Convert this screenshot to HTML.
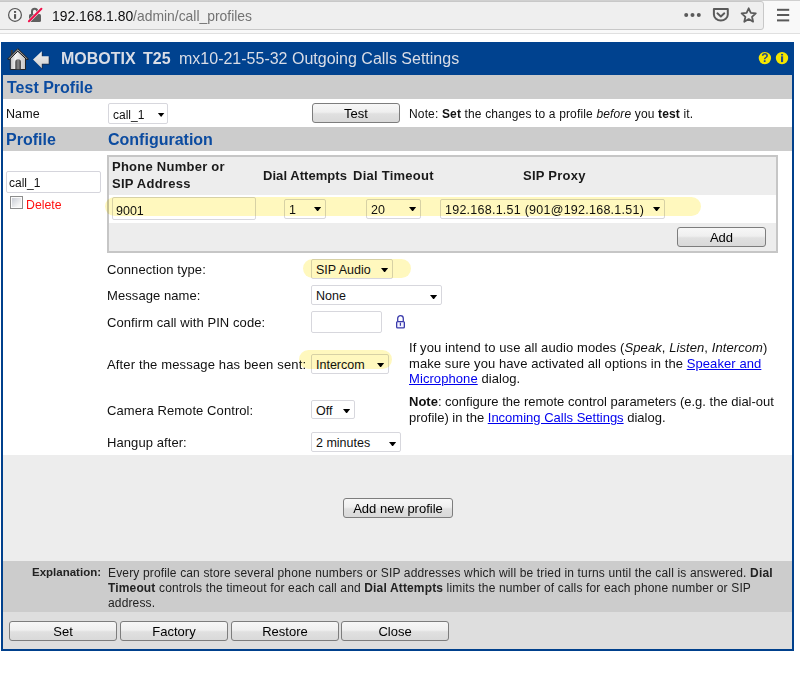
<!DOCTYPE html>
<html><head><meta charset="utf-8">
<style>
*{box-sizing:border-box;margin:0;padding:0}
html,body{width:800px;height:675px;overflow:hidden;background:#fff;font-family:"Liberation Sans",sans-serif;font-size:13px;color:#000;position:relative}
.a{position:absolute;white-space:nowrap}
.chrome{left:0;top:0;width:800px;height:34px;background:#f9f9f9;border-top:1px solid #d0d0d0;border-bottom:1px solid #e0e0e0}
.urlbar{left:-3px;top:1px;width:767px;height:29px;background:#efefef;border:1px solid #c8c8c8;border-radius:3px}
.url{left:52px;top:8px;font-size:13.9px;color:#0c0c0d}
.url span{color:#737373}
.dlg{left:1px;top:42px;width:793px;height:609px;border:2px solid #00408c;background:#fff}
.hdr{left:1px;top:42px;width:793px;height:33px;background:#00428f}
.band{background:#cccccc}
.bt{color:#0b4ba0;font-weight:bold;font-size:16px}
.btn{background:linear-gradient(#f7f7f7,#efefef 45%,#e0e0e0 55%,#d9d9d9);border:1px solid #7d7d7d;border-radius:3px;text-align:center;font-size:13px;color:#000;line-height:19px}
.sel{background:#fff;border:1px solid #d7d7dd;border-radius:2px;font-size:12.5px;line-height:20px;padding-left:4px;color:#111}
.arr{position:absolute;width:7.2px;height:4.4px;background:#000;clip-path:polygon(0 0,100% 0,50% 100%);margin-top:1.1px}
.hl{background:#fff8be;mix-blend-mode:multiply;border-radius:10px}
.lbl{font-size:13px;color:#111;letter-spacing:0.08px}
a{color:#0000ee;text-decoration:underline}
.hd{font-weight:bold;font-size:13px;color:#1a1a1a;letter-spacing:0.25px}
</style></head><body>
<!-- browser chrome -->
<div class="a chrome"></div>
<div class="a urlbar"></div>
<svg class="a" style="left:0;top:0" width="800" height="34" viewBox="0 0 800 34">
  <circle cx="15" cy="14.9" r="6.4" fill="none" stroke="#555" stroke-width="1.2"/>
  <rect x="14" y="14.1" width="2.1" height="4.7" fill="#555"/>
  <rect x="14" y="11" width="2.1" height="1.9" fill="#555"/>
  <path d="M32 14.5 V11.5 a2.65 2.65 0 0 1 5.3 0 V14.5" fill="none" stroke="#606060" stroke-width="2"/>
  <rect x="29" y="14" width="12" height="8" rx="1.5" fill="#606060"/>
  <line x1="28.2" y1="22" x2="42" y2="8.2" stroke="#efefef" stroke-width="3.1"/>
  <line x1="28.9" y1="21.3" x2="41.4" y2="8.8" stroke="#f0104a" stroke-width="2" stroke-linecap="round"/>
  <circle cx="686.2" cy="15" r="2" fill="#5a5a5a"/>
  <circle cx="692.5" cy="15" r="2" fill="#5a5a5a"/>
  <circle cx="698.8" cy="15" r="2" fill="#5a5a5a"/>
  <path d="M713.9 9.1 H727.8 V14.5 A6.95 6 0 0 1 713.9 14.5 Z" fill="none" stroke="#5a5a5a" stroke-width="2" stroke-linejoin="round"/>
  <path d="M717.4 13.3 l3.45 3.2 l3.45 -3.2" fill="none" stroke="#5a5a5a" stroke-width="1.9" stroke-linecap="round" stroke-linejoin="round"/>
  <path d="M748.7 8.3 l2.1 4.6 l5 .5 l-3.8 3.4 l1.1 4.9 l-4.4 -2.6 l-4.4 2.6 l1.1 -4.9 l-3.8 -3.4 l5 -.5 z" fill="none" stroke="#5a5a5a" stroke-width="1.8" stroke-linejoin="round"/>
  <rect x="777" y="8.8" width="12.2" height="2" fill="#5a5a5a"/>
  <rect x="777" y="14" width="12.2" height="2" fill="#5a5a5a"/>
  <rect x="777" y="19.4" width="12.2" height="2" fill="#5a5a5a"/>
</svg>
<div class="a url">192.168.1.80<span>/admin/call_profiles</span></div>

<!-- dialog -->
<div class="a dlg"></div>
<div class="a hdr"></div>
<svg class="a" style="left:0;top:42px" width="800" height="33" viewBox="0 42 800 33">
  <!-- home -->
  <defs>
    <linearGradient id="wall" x1="0" y1="0" x2="1" y2="0"><stop offset="0" stop-color="#bdbdbd"/><stop offset="0.35" stop-color="#f4f4f4"/><stop offset="1" stop-color="#c4c4c4"/></linearGradient>
    <linearGradient id="door" x1="0" y1="0" x2="1" y2="0"><stop offset="0" stop-color="#3a3a3a"/><stop offset="0.5" stop-color="#8a8a8a"/><stop offset="1" stop-color="#3a3a3a"/></linearGradient>
    <linearGradient id="arw" x1="0" y1="0" x2="0" y2="1"><stop offset="0" stop-color="#f0f0f0"/><stop offset="1" stop-color="#cfcfcf"/></linearGradient>
  </defs>
  <rect x="10.8" y="50" width="2" height="5" fill="#3a3a3a"/>
  <path d="M10.3 58 L17.8 51 L25.5 58 V69.5 H10.3 Z" fill="url(#wall)" stroke="#1a1a1a" stroke-width="0.9"/>
  <path d="M7.6 59 L17.8 48.6 L28.4 59 L26.8 59.6 L17.8 51.2 L9.2 59.6 Z" fill="#9a9a9a" stroke="#1a1a1a" stroke-width="1" stroke-linejoin="round"/>
  <path d="M15.3 69.3 V62 a2.8 2.8 0 0 1 5.6 0 V69.3 Z" fill="url(#door)"/>
  <!-- back arrow -->
  <path d="M34.2 60.6 L42.6 52.2 L42.6 57.2 L49.5 57.2 L49.5 64.6 L42.6 64.6 L42.6 69.2 Z" fill="#1e2a40"/>
  <path d="M33 59.6 L41.8 51.2 L41.8 56.2 L48.7 56.2 L48.7 63.7 L41.8 63.7 L41.8 68.3 Z" fill="url(#arw)"/>
  <!-- help icons -->
  <circle cx="764.9" cy="58.1" r="6.2" fill="#f5e600"/>
  <circle cx="782" cy="58.1" r="6.2" fill="#f5e600"/>
  <text x="765" y="62.2" font-family="Liberation Sans" font-weight="bold" font-size="12" fill="#234a8c" text-anchor="middle">?</text>
  <rect x="781" y="56.3" width="2.1" height="5.8" fill="#234a8c"/>
  <rect x="781" y="53.9" width="2.1" height="1.5" fill="#234a8c"/>
</svg>
<div class="a" style="left:61px;top:50px;font-size:16px;font-weight:bold;color:#d9dde6">MOBOTIX</div>
<div class="a" style="left:143px;top:50px;font-size:16px;font-weight:bold;color:#d9dde6">T25</div>
<div class="a" style="left:179px;top:50px;font-size:16px;color:#d9dde6">mx10-21-55-32 Outgoing Calls Settings</div>

<div class="a band" style="left:3px;top:75px;width:789px;height:24px"></div>
<div class="a bt" style="left:7px;top:79px">Test Profile</div>
<div class="a lbl" style="left:6px;top:107px;font-size:12.5px">Name</div>
<div class="a sel" style="left:108px;top:103px;width:60px;height:21px;font-size:12px;padding:1px 0 0 4px">call_1</div>
<div class="arr" style="left:157.5px;top:111.5px"></div>
<div class="a btn" style="left:312px;top:103px;width:88px;height:20px;line-height:20px">Test</div>
<div class="a" style="left:409px;top:107px;font-size:12px;color:#111;letter-spacing:0.15px">Note: <b>Set</b> the changes to a profile <i>before</i> you <b>test</b> it.</div>

<div class="a band" style="left:3px;top:127px;width:789px;height:24px"></div>
<div class="a bt" style="left:6px;top:131px">Profile</div>
<div class="a bt" style="left:108px;top:131px">Configuration</div>

<!-- profile list -->
<div class="a" style="left:6px;top:171px;width:95px;height:22px;border:1px solid #d5d5dc;border-radius:2px;font-size:12px;padding:4px 0 0 2px;color:#111">call_1</div>
<div class="a" style="left:10px;top:196px;width:13px;height:13px;border:1px solid #8c8c8c;box-shadow:inset 0 0 0 1px #fbfbfb;background:linear-gradient(135deg,#c3c7d0,#f6f6f6 75%)"></div>
<div class="a" style="left:26px;top:198px;font-size:12.3px;color:#ff1010">Delete</div>

<!-- config box -->
<div class="a" style="left:107px;top:155px;width:671px;height:98px;border:2px solid #c6c6c6;background:#ededed"></div>
<div class="a" style="left:109px;top:195px;width:667px;height:28px;background:#fff"></div>
<div class="a hd" style="left:112px;top:159px;line-height:16.5px">Phone Number or<br>SIP Address</div>
<div class="a hd" style="left:263px;top:168px;letter-spacing:0.05px">Dial Attempts</div>
<div class="a hd" style="left:353px;top:168px">Dial Timeout</div>
<div class="a hd" style="left:523px;top:168px">SIP Proxy</div>

<div class="a sel" style="left:112px;top:197px;width:144px;height:23px;font-size:12.5px;padding:3px 0 0 3px">9001</div>
<div class="a sel" style="left:284px;top:199px;width:42px;height:20px;padding-left:4px">1</div>
<div class="arr" style="left:314px;top:206px"></div>
<div class="a sel" style="left:366px;top:199px;width:55px;height:20px;padding-left:4px">20</div>
<div class="arr" style="left:409px;top:206px"></div>
<div class="a sel" style="left:440px;top:199px;width:225px;height:20px;padding-left:4px;letter-spacing:0.25px">192.168.1.51 (901@192.168.1.51)</div>
<div class="arr" style="left:653px;top:206px"></div>
<div class="a hl" style="left:105px;top:197px;width:596px;height:19px"></div>
<div class="a btn" style="left:677px;top:227px;width:89px;height:20px">Add</div>

<!-- settings -->
<div class="a lbl" style="left:107px;top:262px">Connection type:</div>
<div class="a lbl" style="left:107px;top:288px">Message name:</div>
<div class="a lbl" style="left:107px;top:315px">Confirm call with PIN code:</div>
<div class="a lbl" style="left:107px;top:357px;letter-spacing:0.15px">After the message has been sent:</div>
<div class="a lbl" style="left:107px;top:403px">Camera Remote Control:</div>
<div class="a lbl" style="left:107px;top:435px">Hangup after:</div>

<div class="a sel" style="left:311px;top:259px;width:82px;height:20px">SIP Audio</div>
<div class="arr" style="left:381px;top:267px"></div>
<div class="a hl" style="left:303px;top:259px;width:108px;height:19px;border-radius:9.5px"></div>
<div class="a sel" style="left:311px;top:285px;width:131px;height:20px">None</div>
<div class="arr" style="left:430px;top:294px"></div>
<div class="a sel" style="left:311px;top:311px;width:71px;height:22px"></div>
<svg class="a" style="left:395px;top:314px" width="12" height="16" viewBox="0 0 12 16">
  <path d="M2.7 7.6 V4.4 a2.8 2.8 0 0 1 5.6 0 V7.6" fill="none" stroke="#3a3aab" stroke-width="1.3"/>
  <rect x="1.65" y="7.6" width="7.7" height="6.3" rx="1" fill="#f2f2ff" stroke="#3a3aab" stroke-width="1.3"/>
  <rect x="4.8" y="8.6" width="1.2" height="3.2" fill="#3a3aab"/>
</svg>
<div class="a sel" style="left:311px;top:354px;width:78px;height:20px">Intercom</div>
<div class="arr" style="left:377px;top:362px"></div>
<div class="a hl" style="left:299px;top:350px;width:93px;height:19px;border-radius:9.5px"></div>
<div class="a sel" style="left:311px;top:400px;width:44px;height:19px">Off</div>
<div class="arr" style="left:343px;top:408px"></div>
<div class="a sel" style="left:311px;top:432px;width:90px;height:20px">2 minutes</div>
<div class="arr" style="left:389px;top:441px"></div>

<div class="a lbl" style="left:409px;top:340px;line-height:15.7px">If you intend to use all audio modes (<i>Speak</i>, <i>Listen</i>, <i>Intercom</i>)<br>make sure you have activated all options in the <a>Speaker and</a><br><a>Microphone</a> dialog.</div>
<div class="a lbl" style="left:409px;top:394px;line-height:16px;letter-spacing:0"><b>Note</b>: configure the remote control parameters (e.g. the dial-out<br>profile) in the <a>Incoming Calls Settings</a> dialog.</div>

<!-- lower gray areas -->
<div class="a" style="left:3px;top:455px;width:789px;height:106px;background:#ededed"></div>
<div class="a btn" style="left:343px;top:498px;width:110px;height:20px">Add new profile</div>
<div class="a" style="left:3px;top:561px;width:789px;height:51px;background:#cccccc"></div>
<div class="a" style="left:32px;top:566px;font-size:11.5px;font-weight:bold;color:#222">Explanation:</div>
<div class="a" style="left:108px;top:566px;font-size:12px;line-height:15px;color:#222;letter-spacing:0.15px">Every profile can store several phone numbers or SIP addresses which will be tried in turns until the call is answered. <b>Dial</b><br><b>Timeout</b> controls the timeout for each call and <b>Dial Attempts</b> limits the number of calls for each phone number or SIP<br>address.</div>
<div class="a" style="left:3px;top:612px;width:789px;height:37px;background:#dedede"></div>
<div class="a btn" style="left:9px;top:621px;width:108px;height:20px">Set</div>
<div class="a btn" style="left:120px;top:621px;width:108px;height:20px">Factory</div>
<div class="a btn" style="left:231px;top:621px;width:108px;height:20px">Restore</div>
<div class="a btn" style="left:341px;top:621px;width:108px;height:20px">Close</div>
</body></html>
